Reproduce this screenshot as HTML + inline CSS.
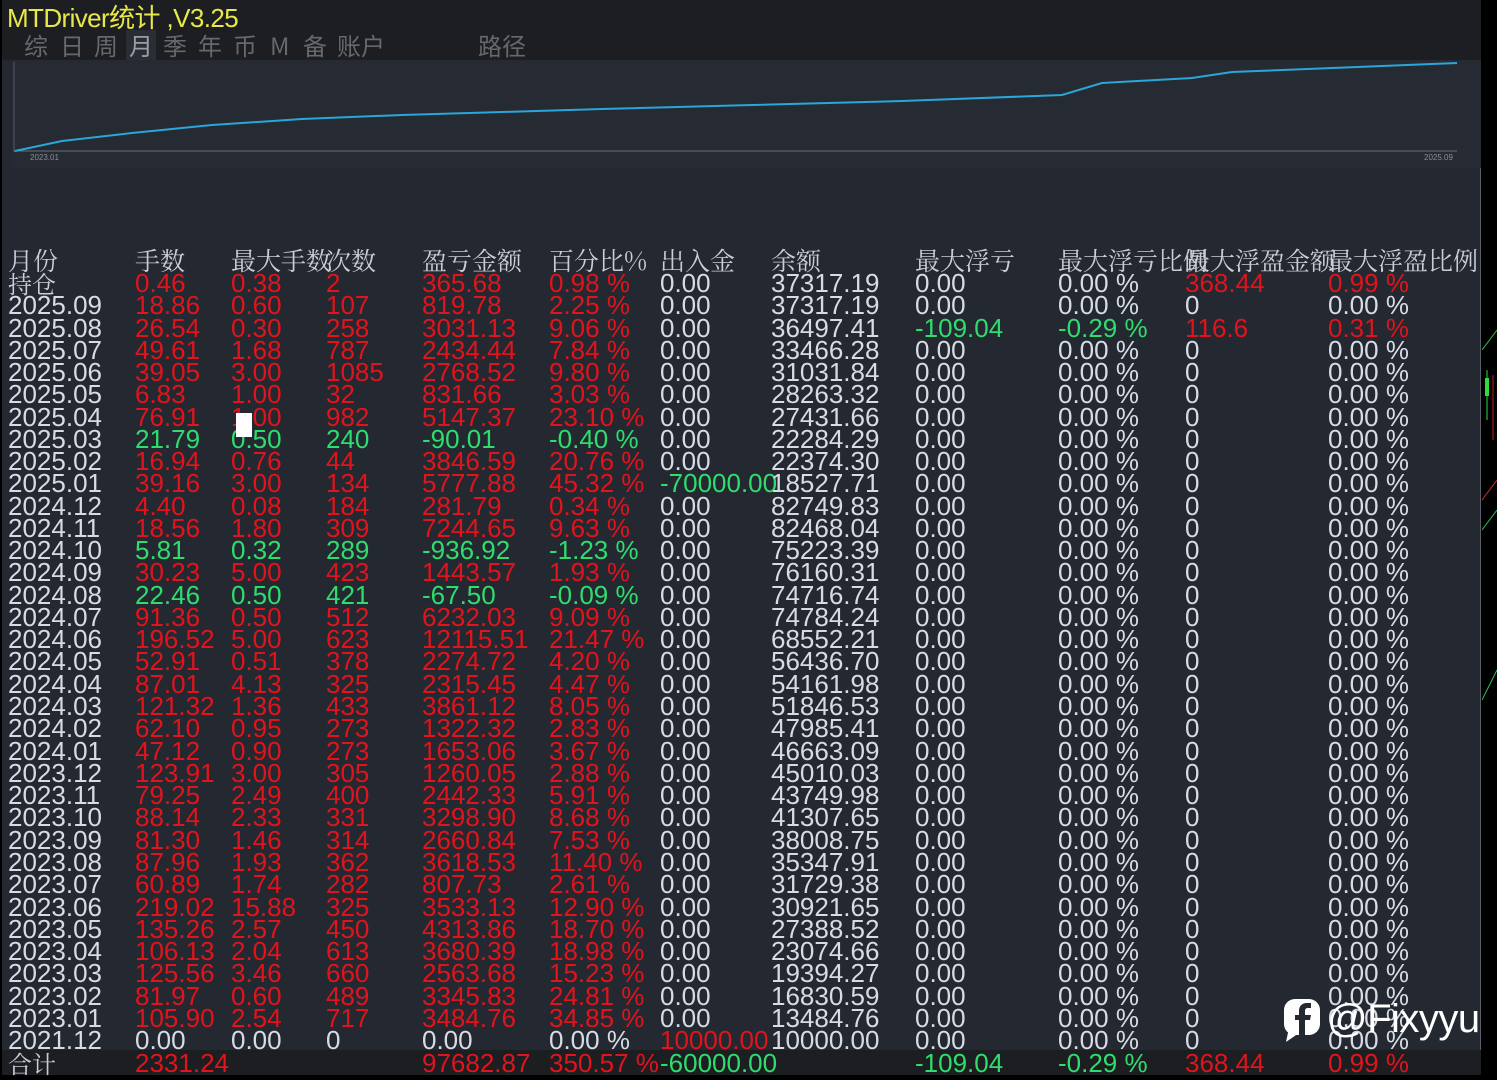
<!DOCTYPE html>
<html><head><meta charset="utf-8">
<style>
*{margin:0;padding:0;box-sizing:border-box}
body{width:1497px;height:1080px;background:#000;position:relative;overflow:hidden;font-family:"Liberation Sans","Noto Sans CJK SC",sans-serif}
#panel{position:absolute;left:2px;top:0;width:1479px;height:1075px;background:#242830;border-right:1px solid #5a5e66}
#titlebar{position:absolute;left:0;top:0;width:1479px;height:60px;background:#1d1e21}
#title{position:absolute;left:5px;top:-2px;font-size:26px;color:#e8e84a;letter-spacing:-0.6px}
.tab{position:absolute;top:30px;font-size:24px;color:#65686d;font-family:"Noto Sans CJK SC",sans-serif;line-height:30px}
#chart{position:absolute;left:10px;top:60px;width:1469px;height:108px;background:#262a33}
.r{position:absolute;left:0;height:22px;line-height:22px;font-size:26px;color:#d6dbe4;white-space:nowrap;width:1479px}
.r span{position:absolute;top:0}
.r span:nth-child(1){left:6px}
.r span:nth-child(2){left:133px}
.r span:nth-child(3){left:229px}
.r span:nth-child(4){left:324px}
.r span:nth-child(5){left:420px}
.r span:nth-child(6){left:547px}
.r span:nth-child(7){left:658px}
.r span:nth-child(8){left:769px}
.r span:nth-child(9){left:913px}
.r span:nth-child(10){left:1056px}
.r span:nth-child(11){left:1183px}
.r span:nth-child(12){left:1326px}
.h{font-family:"Noto Serif CJK SC",serif;font-size:25px;color:#c9ced6}
.R{color:#e0141c}
.G{color:#2fdc6e}
.rr span:nth-child(n+2):nth-child(-n+6){color:#e0141c}
.gg span:nth-child(n+2):nth-child(-n+6){color:#2fdc6e}
</style></head><body>
<div id="panel">
<div id="titlebar"></div>
<div id="title">MTDriver统计 ,V3.25</div>
<div class="tab" style="left:22px">综</div>
<div class="tab" style="left:58px">日</div>
<div class="tab" style="left:92px">周</div>
<div class="tab" style="left:124px;background:#2a2d33;color:#9a9ea6;padding:0 3px">月</div>
<div class="tab" style="left:161px">季</div>
<div class="tab" style="left:196px">年</div>
<div class="tab" style="left:231px">币</div>
<div class="tab" style="left:268px">M</div>
<div class="tab" style="left:301px">备</div>
<div class="tab" style="left:335px">账户</div>
<div class="tab" style="left:476px">路径</div>
<div id="chart"></div>
<svg style="position:absolute;left:0;top:0" width="1479" height="170">
<line x1="12" y1="62" x2="12" y2="152" stroke="#555a62" stroke-width="1"/>
<line x1="12" y1="151" x2="1455" y2="151" stroke="#6a6e76" stroke-width="1"/>
<polyline fill="none" stroke="#2aa6d8" stroke-width="2" points="13,151 60,141 130,133 210,125 300,119 400,115 500,112 600,109 750,105 900,101 1060,95 1100,83 1190,78 1230,72 1455,63"/>
<text x="28" y="160" font-size="8" fill="#8a8e96" font-family="Liberation Sans">2023.01</text>
<text x="1422" y="160" font-size="8" fill="#8a8e96" font-family="Liberation Sans">2025.09</text>
</svg>
<div style="position:absolute;left:0;top:1050px;width:1479px;height:25px;background:#1c1e22"></div>

<div class="r h" style="top:249px"><span>月份</span><span>手数</span><span>最大手数</span><span>次数</span><span>盈亏金额</span><span>百分比%</span><span>出入金</span><span>余额</span><span>最大浮亏</span><span>最大浮亏比例</span><span>最大浮盈金额</span><span>最大浮盈比例</span></div>
<div class="r rr" style="top:272px"><span class="h" style="font-size:24px">持仓</span><span>0.46</span><span>0.38</span><span>2</span><span>365.68</span><span>0.98 %</span><span>0.00</span><span>37317.19</span><span>0.00</span><span>0.00 %</span><span class="R">368.44</span><span class="R">0.99 %</span></div>
<div class="r rr" style="top:294px"><span>2025.09</span><span>18.86</span><span>0.60</span><span>107</span><span>819.78</span><span>2.25 %</span><span>0.00</span><span>37317.19</span><span>0.00</span><span>0.00 %</span><span>0</span><span>0.00 %</span></div>
<div class="r rr" style="top:317px"><span>2025.08</span><span>26.54</span><span>0.30</span><span>258</span><span>3031.13</span><span>9.06 %</span><span>0.00</span><span>36497.41</span><span class="G">-109.04</span><span class="G">-0.29 %</span><span class="R">116.6</span><span class="R">0.31 %</span></div>
<div class="r rr" style="top:339px"><span>2025.07</span><span>49.61</span><span>1.68</span><span>787</span><span>2434.44</span><span>7.84 %</span><span>0.00</span><span>33466.28</span><span>0.00</span><span>0.00 %</span><span>0</span><span>0.00 %</span></div>
<div class="r rr" style="top:361px"><span>2025.06</span><span>39.05</span><span>3.00</span><span>1085</span><span>2768.52</span><span>9.80 %</span><span>0.00</span><span>31031.84</span><span>0.00</span><span>0.00 %</span><span>0</span><span>0.00 %</span></div>
<div class="r rr" style="top:383px"><span>2025.05</span><span>6.83</span><span>1.00</span><span>32</span><span>831.66</span><span>3.03 %</span><span>0.00</span><span>28263.32</span><span>0.00</span><span>0.00 %</span><span>0</span><span>0.00 %</span></div>
<div class="r rr" style="top:406px"><span>2025.04</span><span>76.91</span><span>1.00</span><span>982</span><span>5147.37</span><span>23.10 %</span><span>0.00</span><span>27431.66</span><span>0.00</span><span>0.00 %</span><span>0</span><span>0.00 %</span></div>
<div class="r gg" style="top:428px"><span>2025.03</span><span>21.79</span><span>0.50</span><span>240</span><span>-90.01</span><span>-0.40 %</span><span>0.00</span><span>22284.29</span><span>0.00</span><span>0.00 %</span><span>0</span><span>0.00 %</span></div>
<div style="position:absolute;left:234px;top:413px;width:16px;height:24px;background:#fff"></div>
<div class="r rr" style="top:450px"><span>2025.02</span><span>16.94</span><span>0.76</span><span>44</span><span>3846.59</span><span>20.76 %</span><span>0.00</span><span>22374.30</span><span>0.00</span><span>0.00 %</span><span>0</span><span>0.00 %</span></div>
<div class="r rr" style="top:472px"><span>2025.01</span><span>39.16</span><span>3.00</span><span>134</span><span>5777.88</span><span>45.32 %</span><span class="G">-70000.00</span><span>18527.71</span><span>0.00</span><span>0.00 %</span><span>0</span><span>0.00 %</span></div>
<div class="r rr" style="top:495px"><span>2024.12</span><span>4.40</span><span>0.08</span><span>184</span><span>281.79</span><span>0.34 %</span><span>0.00</span><span>82749.83</span><span>0.00</span><span>0.00 %</span><span>0</span><span>0.00 %</span></div>
<div class="r rr" style="top:517px"><span>2024.11</span><span>18.56</span><span>1.80</span><span>309</span><span>7244.65</span><span>9.63 %</span><span>0.00</span><span>82468.04</span><span>0.00</span><span>0.00 %</span><span>0</span><span>0.00 %</span></div>
<div class="r gg" style="top:539px"><span>2024.10</span><span>5.81</span><span>0.32</span><span>289</span><span>-936.92</span><span>-1.23 %</span><span>0.00</span><span>75223.39</span><span>0.00</span><span>0.00 %</span><span>0</span><span>0.00 %</span></div>
<div class="r rr" style="top:561px"><span>2024.09</span><span>30.23</span><span>5.00</span><span>423</span><span>1443.57</span><span>1.93 %</span><span>0.00</span><span>76160.31</span><span>0.00</span><span>0.00 %</span><span>0</span><span>0.00 %</span></div>
<div class="r gg" style="top:584px"><span>2024.08</span><span>22.46</span><span>0.50</span><span>421</span><span>-67.50</span><span>-0.09 %</span><span>0.00</span><span>74716.74</span><span>0.00</span><span>0.00 %</span><span>0</span><span>0.00 %</span></div>
<div class="r rr" style="top:606px"><span>2024.07</span><span>91.36</span><span>0.50</span><span>512</span><span>6232.03</span><span>9.09 %</span><span>0.00</span><span>74784.24</span><span>0.00</span><span>0.00 %</span><span>0</span><span>0.00 %</span></div>
<div class="r rr" style="top:628px"><span>2024.06</span><span>196.52</span><span>5.00</span><span>623</span><span>12115.51</span><span>21.47 %</span><span>0.00</span><span>68552.21</span><span>0.00</span><span>0.00 %</span><span>0</span><span>0.00 %</span></div>
<div class="r rr" style="top:650px"><span>2024.05</span><span>52.91</span><span>0.51</span><span>378</span><span>2274.72</span><span>4.20 %</span><span>0.00</span><span>56436.70</span><span>0.00</span><span>0.00 %</span><span>0</span><span>0.00 %</span></div>
<div class="r rr" style="top:673px"><span>2024.04</span><span>87.01</span><span>4.13</span><span>325</span><span>2315.45</span><span>4.47 %</span><span>0.00</span><span>54161.98</span><span>0.00</span><span>0.00 %</span><span>0</span><span>0.00 %</span></div>
<div class="r rr" style="top:695px"><span>2024.03</span><span>121.32</span><span>1.36</span><span>433</span><span>3861.12</span><span>8.05 %</span><span>0.00</span><span>51846.53</span><span>0.00</span><span>0.00 %</span><span>0</span><span>0.00 %</span></div>
<div class="r rr" style="top:717px"><span>2024.02</span><span>62.10</span><span>0.95</span><span>273</span><span>1322.32</span><span>2.83 %</span><span>0.00</span><span>47985.41</span><span>0.00</span><span>0.00 %</span><span>0</span><span>0.00 %</span></div>
<div class="r rr" style="top:740px"><span>2024.01</span><span>47.12</span><span>0.90</span><span>273</span><span>1653.06</span><span>3.67 %</span><span>0.00</span><span>46663.09</span><span>0.00</span><span>0.00 %</span><span>0</span><span>0.00 %</span></div>
<div class="r rr" style="top:762px"><span>2023.12</span><span>123.91</span><span>3.00</span><span>305</span><span>1260.05</span><span>2.88 %</span><span>0.00</span><span>45010.03</span><span>0.00</span><span>0.00 %</span><span>0</span><span>0.00 %</span></div>
<div class="r rr" style="top:784px"><span>2023.11</span><span>79.25</span><span>2.49</span><span>400</span><span>2442.33</span><span>5.91 %</span><span>0.00</span><span>43749.98</span><span>0.00</span><span>0.00 %</span><span>0</span><span>0.00 %</span></div>
<div class="r rr" style="top:806px"><span>2023.10</span><span>88.14</span><span>2.33</span><span>331</span><span>3298.90</span><span>8.68 %</span><span>0.00</span><span>41307.65</span><span>0.00</span><span>0.00 %</span><span>0</span><span>0.00 %</span></div>
<div class="r rr" style="top:829px"><span>2023.09</span><span>81.30</span><span>1.46</span><span>314</span><span>2660.84</span><span>7.53 %</span><span>0.00</span><span>38008.75</span><span>0.00</span><span>0.00 %</span><span>0</span><span>0.00 %</span></div>
<div class="r rr" style="top:851px"><span>2023.08</span><span>87.96</span><span>1.93</span><span>362</span><span>3618.53</span><span>11.40 %</span><span>0.00</span><span>35347.91</span><span>0.00</span><span>0.00 %</span><span>0</span><span>0.00 %</span></div>
<div class="r rr" style="top:873px"><span>2023.07</span><span>60.89</span><span>1.74</span><span>282</span><span>807.73</span><span>2.61 %</span><span>0.00</span><span>31729.38</span><span>0.00</span><span>0.00 %</span><span>0</span><span>0.00 %</span></div>
<div class="r rr" style="top:896px"><span>2023.06</span><span>219.02</span><span>15.88</span><span>325</span><span>3533.13</span><span>12.90 %</span><span>0.00</span><span>30921.65</span><span>0.00</span><span>0.00 %</span><span>0</span><span>0.00 %</span></div>
<div class="r rr" style="top:918px"><span>2023.05</span><span>135.26</span><span>2.57</span><span>450</span><span>4313.86</span><span>18.70 %</span><span>0.00</span><span>27388.52</span><span>0.00</span><span>0.00 %</span><span>0</span><span>0.00 %</span></div>
<div class="r rr" style="top:940px"><span>2023.04</span><span>106.13</span><span>2.04</span><span>613</span><span>3680.39</span><span>18.98 %</span><span>0.00</span><span>23074.66</span><span>0.00</span><span>0.00 %</span><span>0</span><span>0.00 %</span></div>
<div class="r rr" style="top:962px"><span>2023.03</span><span>125.56</span><span>3.46</span><span>660</span><span>2563.68</span><span>15.23 %</span><span>0.00</span><span>19394.27</span><span>0.00</span><span>0.00 %</span><span>0</span><span>0.00 %</span></div>
<div class="r rr" style="top:985px"><span>2023.02</span><span>81.97</span><span>0.60</span><span>489</span><span>3345.83</span><span>24.81 %</span><span>0.00</span><span>16830.59</span><span>0.00</span><span>0.00 %</span><span>0</span><span>0.00 %</span></div>
<div class="r rr" style="top:1007px"><span>2023.01</span><span>105.90</span><span>2.54</span><span>717</span><span>3484.76</span><span>34.85 %</span><span>0.00</span><span>13484.76</span><span>0.00</span><span>0.00 %</span><span>0</span><span>0.00 %</span></div>
<div class="r" style="top:1029px;height:21px;overflow:hidden"><span>2021.12</span><span>0.00</span><span>0.00</span><span>0</span><span>0.00</span><span>0.00 %</span><span class="R">10000.00</span><span>10000.00</span><span>0.00</span><span>0.00 %</span><span>0</span><span>0.00 %</span></div>
<div class="r" style="top:1052px"><span class="h" style="font-size:24px">合计</span><span class="R">2331.24</span><span></span><span></span><span class="R">97682.87</span><span class="R">350.57 %</span><span class="G">-60000.00</span><span></span><span class="G">-109.04</span><span class="G">-0.29 %</span><span class="R">368.44</span><span class="R">0.99 %</span></div>
</div>
<svg style="position:absolute;left:1482px;top:300px" width="15" height="420">
<polyline points="0,50 15,30" stroke="#2fbf5a" fill="none"/>
<rect x="3" y="78" width="4" height="18" fill="#2fdc3a"/>
<line x1="5" y1="70" x2="5" y2="120" stroke="#2fdc3a"/>
<line x1="11" y1="75" x2="11" y2="140" stroke="#c02020"/>
<polyline points="0,200 15,180" stroke="#c03030" fill="none"/>
<polyline points="0,230 15,210" stroke="#2fbf5a" fill="none"/>
<polyline points="0,400 15,370" stroke="#2fbf5a" fill="none"/>
</svg>
<svg style="position:absolute;left:1283px;top:998px" width="40" height="46">
<rect x="1" y="1" width="36" height="36" rx="11" fill="#fff"/>
<path d="M6,30 L3,44 L16,35 Z" fill="#fff"/>
<path d="M22,37 V22 H27 L28,17 H22 V13 C22,11 23,10 25,10 H28 V5 H24 C19,5 16,8 16,13 V17 H12 V22 H16 V37 Z" fill="#242830"/>
</svg>
<div style="position:absolute;left:1327px;top:997px;font-size:40px;color:#fff;letter-spacing:-0.5px">@Fixyyu</div>
</body></html>
